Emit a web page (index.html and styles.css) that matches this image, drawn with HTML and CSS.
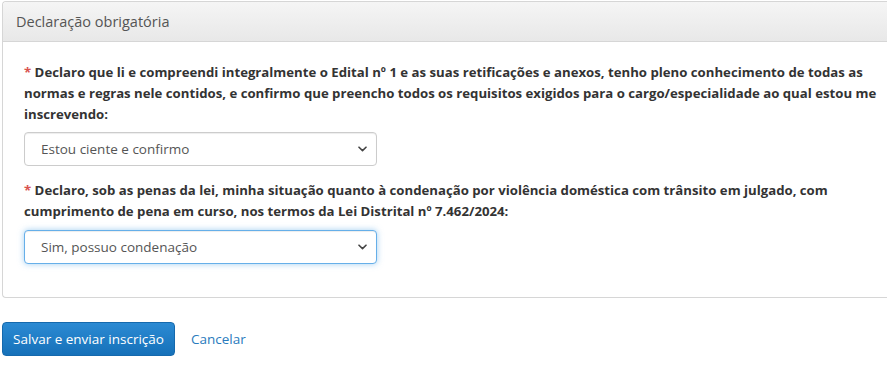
FILE: index.html
```html
<!DOCTYPE html>
<html lang="pt-BR">
<head>
    <meta charset="UTF-8">
    <meta name="viewport" content="width=device-width, initial-scale=1.0">
    <title>Declaração obrigatória</title>
    <link rel="stylesheet" href="styles.css">
</head>
<body>
    <div class="panel">
        <div class="panel-heading">Declaração obrigatória</div>
        <div class="panel-body">
            <div class="form-group">
                <label class="label"><span class="req">*</span> Declaro que li e compreendi integralmente o Edital nº 1 e as suas retificações e anexos, tenho pleno conhecimento de todas as normas e regras nele contidos, e confirmo que preencho todos os requisitos exigidos para o cargo/especialidade ao qual estou me inscrevendo:</label>
                <div class="select-wrap">
                    <select class="select">
                        <option>Estou ciente e confirmo</option>
                    </select>
                    <svg class="chevron" width="9" height="6" viewBox="0 0 9 6"><path d="M1 1.2 L4.5 4.6 L8 1.2" fill="none" stroke="#444" stroke-width="1.6" stroke-linecap="round" stroke-linejoin="round"/></svg>
                </div>
            </div>
            <div class="form-group">
                <label class="label"><span class="req">*</span> Declaro, sob as penas da lei, minha situação quanto à condenação por violência doméstica com trânsito em julgado, com cumprimento de pena em curso, nos termos da Lei Distrital nº 7.462/2024:</label>
                <div class="select-wrap">
                    <select class="select focused">
                        <option>Sim, possuo condenação</option>
                    </select>
                    <svg class="chevron" width="9" height="6" viewBox="0 0 9 6"><path d="M1 1.2 L4.5 4.6 L8 1.2" fill="none" stroke="#444" stroke-width="1.6" stroke-linecap="round" stroke-linejoin="round"/></svg>
                </div>
            </div>
        </div>
    </div>

    <div class="actions">
        <button class="btn-primary">Salvar e enviar inscrição</button>
        <a class="link" href="#">Cancelar</a>
    </div>
</body>
</html>
```

FILE: styles.css
```css
/* General */
html, body {
    margin: 0;
    overflow: hidden;
    background: #fff;
    font-family: "Open Sans", "Noto Sans", sans-serif;
    color: #333;
}

/* Panel */
.panel {
    margin: 1px 0 0 2px;
    border: 1px solid #d6d6d6;
    border-right: 0;
    border-radius: 4px 0 0 4px;
}
.panel-heading {
    height: 40px;
    box-sizing: border-box;
    padding: 0 13px;
    display: flex;
    align-items: center;
    font-size: 14.5px;
    color: #555;
    background: linear-gradient(#f5f5f5, #e8e8e8);
    border-bottom: 1px solid #d6d6d6;
    border-radius: 4px 0 0 0;
}
.panel-body {
    padding: 20px 0 19px 21px;
}

/* Form */
.form-group {
    margin-bottom: 14px;
}
.label {
    display: block;
    font-size: 13.2px;
    font-weight: bold;
    line-height: 20.8px;
    color: #333;
    margin-bottom: 8px;
    padding-right: 8px;
}
.req {
    color: #d9534f;
}
.select-wrap {
    position: relative;
    width: 353px;
}
.select {
    display: block;
    width: 100%;
    height: 34px;
    box-sizing: border-box;
    appearance: none;
    -webkit-appearance: none;
    border: 1px solid #ccc;
    border-radius: 4px;
    background: #fff;
    padding: 0 16px;
    font-family: inherit;
    font-size: 13.5px;
    color: #555;
    box-shadow: inset 0 1px 1px rgba(0,0,0,.075);
}
.select.focused {
    border-color: #66afe9;
    box-shadow: inset 0 1px 1px rgba(0,0,0,.075), 0 0 6px rgba(102,175,233,.6);
}
.chevron {
    position: absolute;
    right: 10px;
    top: 14px;
    pointer-events: none;
}

/* Actions */
.actions {
    display: flex;
    align-items: center;
    margin: 24px 0 0 2px;
}
.btn-primary {
    width: 173px;
    height: 34px;
    border: 1px solid #1569ad;
    border-radius: 4px;
    background: linear-gradient(#2b8ad3, #1671b9);
    color: #fff;
    font-family: inherit;
    font-size: 13.5px;
    padding: 0;
    cursor: pointer;
}
.link {
    margin-left: 16px;
    color: #2a7bbd;
    font-size: 13.5px;
    text-decoration: none;
}
```
